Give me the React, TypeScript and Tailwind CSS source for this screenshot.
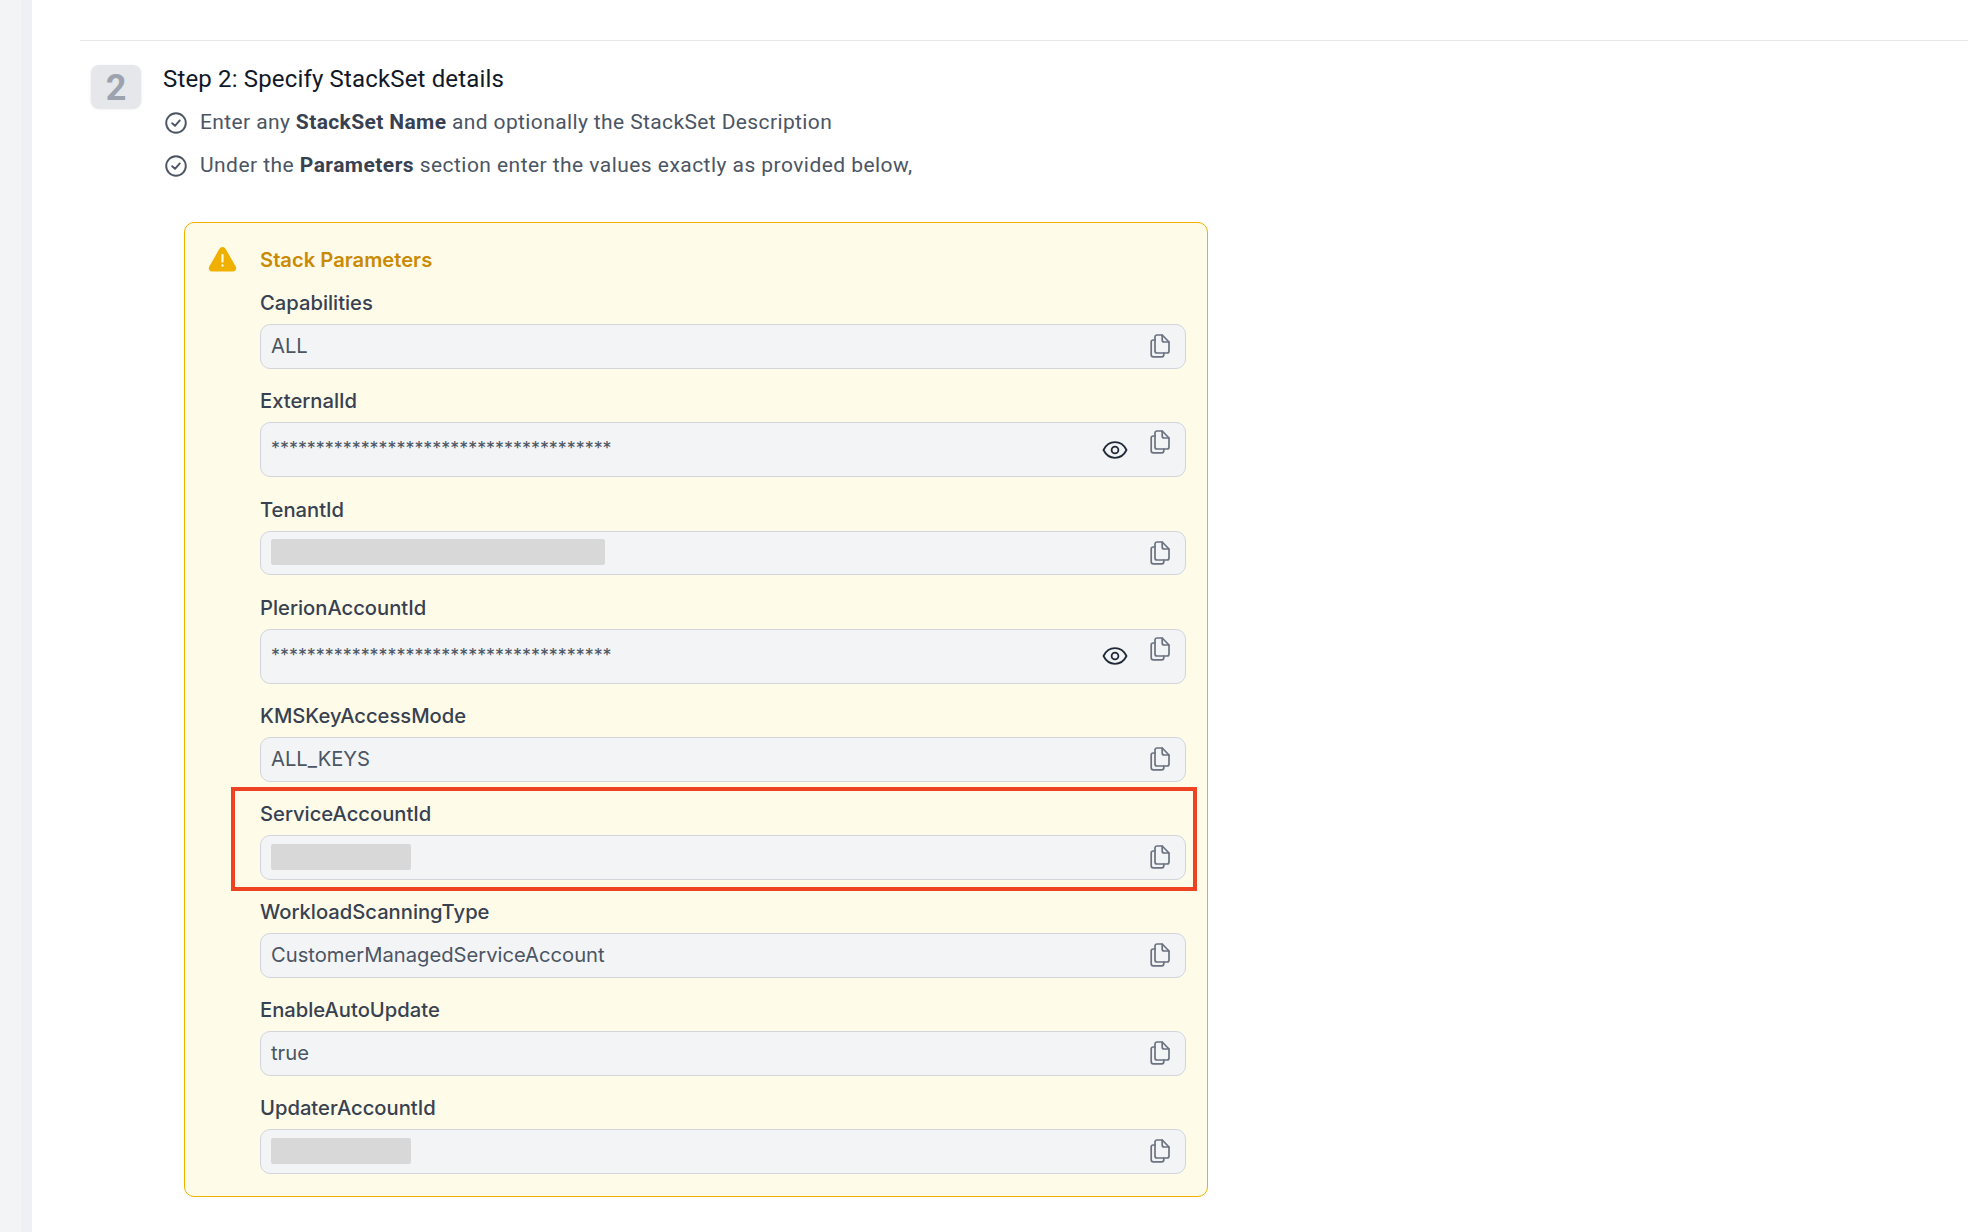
const Copy = () => (
  <svg width="20" height="24" viewBox="0 0 20 24" fill="none" stroke="#6b7280" strokeWidth="1.7" strokeLinejoin="round" strokeLinecap="round">
    <path d="M5 6H3.2a2 2 0 0 0-2 2v12.8a2 2 0 0 0 2 2h8.6a2 2 0 0 0 2-2V19" />
    <path d="M7 1h5.2L19 8v9a2 2 0 0 1-2 2H7a2 2 0 0 1-2-2V3a2 2 0 0 1 2-2z" />
    <path d="M12.2 1.2V6a2 2 0 0 0 2 2h4.6" />
  </svg>
);

const Eye = () => (
  <svg width="26" height="20" viewBox="0 0 26 20" fill="none" stroke="#1f2937" strokeWidth="1.8">
    <path d="M1.5 10C4 5 8 2.2 13 2.2S22 5 24.5 10C22 15 18 17.8 13 17.8S4 15 1.5 10z" strokeLinejoin="round" />
    <circle cx="13" cy="10" r="3.4" />
  </svg>
);

const Check = () => (
  <svg width="24" height="24" viewBox="0 0 24 24" fill="none" stroke="#4b5563" strokeWidth="1.9" strokeLinecap="round" strokeLinejoin="round">
    <circle cx="12" cy="12" r="9.8" />
    <path d="M8.2 12.2l2.8 2.6 4.8-5.4" />
  </svg>
);

const Warn = () => (
  <svg width="29" height="26" viewBox="0 0 29 26">
    <path d="M14.5 1c1.400 0 2.500.8 3.200 2l10 17.600c1.300 2.300-.2 4.900-2.800 4.900H4.100c-2.600 0-4.100-2.600-2.800-4.900l10-17.600C12 1.800 13.100 1 14.500 1z" fill="#f0b000" />
    <rect x="13.400" y="8" width="2.200" height="8.500" rx="1" fill="#fefce8" />
    <rect x="13.400" y="18.200" width="2.200" height="2.500" rx="1" fill="#fefce8" />
  </svg>
);

type FieldProps = {
  label: string;
  value?: string;
  secret?: boolean;
  masked?: string;
  marked?: boolean;
};

const Field = ({ label, value, secret, masked, marked }: FieldProps) => (
  <div className="relative">
    <div className="h-[28px] mb-[7px] text-[20.2px] leading-[28px] font-medium text-[#374151] font-['Inter',sans-serif]">{label}</div>
    <div className={`flex items-center justify-between rounded-[10px] border border-[#d1d5db] bg-[#f3f4f6] pl-[10px] pr-[15px] ${secret ? "h-[55px]" : "h-[44.5px]"}`}>
      {secret ? (
        <span className="text-[17.9px] text-[#4b5563] font-['Inter',sans-serif] -mt-[2px]">{"*".repeat(38)}</span>
      ) : masked ? (
        <div className={`h-[26px] rounded-[2px] bg-[#d8d8d8] -mt-[1px] ${masked}`} />
      ) : (
        <span className="text-[20.2px] text-[#4b5563] font-['Inter',sans-serif]">{value}</span>
      )}
      <div className="flex items-center gap-[22px]">
        {secret && <Eye />}
        <div className={secret ? "-mt-[15px]" : ""}>
          <Copy />
        </div>
      </div>
    </div>
    {marked && <div className="absolute -top-[13px] -bottom-[11px] -left-[29px] -right-[11px] border-[4px] border-[#ee4323] pointer-events-none" />}
  </div>
);

export default function App() {
  return (
    <div className="min-h-screen flex bg-white font-['Roboto',sans-serif]">
      <div className="w-[32px] shrink-0 flex">
        <div className="w-[21px] bg-[#f3f4f6]" />
        <div className="w-[11px] bg-[#eff0f3]" />
      </div>
      <div className="flex-1 pl-[48px] pt-[40px]">
        <div className="border-t border-[#e5e7eb]" />
        <div className="flex mt-[24px] ml-[11px]">
          <div className="w-[50px] h-[43px] rounded-[8px] bg-[#e5e7eb] shadow-sm flex items-center justify-center pt-[2px] text-[36px] font-bold text-[#9ca3af]">2</div>
          <div className="ml-[22px]">
            <div className="text-[24px] leading-[28px] tracking-[0.16px] text-[#111827]">Step 2: Specify StackSet details</div>
            <div className="flex items-center h-[24px] mt-[18px] text-[21px] tracking-[0.38px] text-[#4b5563] ml-[1px]">
              <Check />
              <span className="ml-[12px] -mt-[1px]">Enter any <b className="text-[#374151]">StackSet Name</b> and optionally the StackSet Description</span>
            </div>
            <div className="flex items-center h-[24px] mt-[19px] text-[21px] tracking-[0.45px] text-[#4b5563] ml-[1px]">
              <Check />
              <span className="ml-[12px] -mt-[1px]">Under the <b className="text-[#374151]">Parameters</b> section enter the values exactly as provided below,</span>
            </div>
          </div>
        </div>
        <div className="flex w-[1024px] ml-[104px] mt-[44px] rounded-[10px] border-[1.5px] border-[#f0b000] bg-[#fefce8] pt-[23px] pb-[22px] pl-[23px] pr-[21px]">
          <div className="w-[28px] shrink-0"><Warn /></div>
          <div className="flex-1 ml-[24px]">
            <div className="h-[28px] text-[20.2px] leading-[28px] font-semibold text-[#ca8a04] font-['Inter',sans-serif] mb-[15px]">Stack Parameters</div>
            <div className="flex flex-col gap-[18.5px]">
              <Field label="Capabilities" value="ALL" />
              <Field label="ExternalId" secret />
              <Field label="TenantId" masked="w-[334px]" />
              <Field label="PlerionAccountId" secret />
              <Field label="KMSKeyAccessMode" value="ALL_KEYS" />
              <Field label="ServiceAccountId" masked="w-[140px]" marked />
              <Field label="WorkloadScanningType" value="CustomerManagedServiceAccount" />
              <Field label="EnableAutoUpdate" value="true" />
              <Field label="UpdaterAccountId" masked="w-[140px]" />
            </div>
          </div>
        </div>
      </div>
    </div>
  );
}
